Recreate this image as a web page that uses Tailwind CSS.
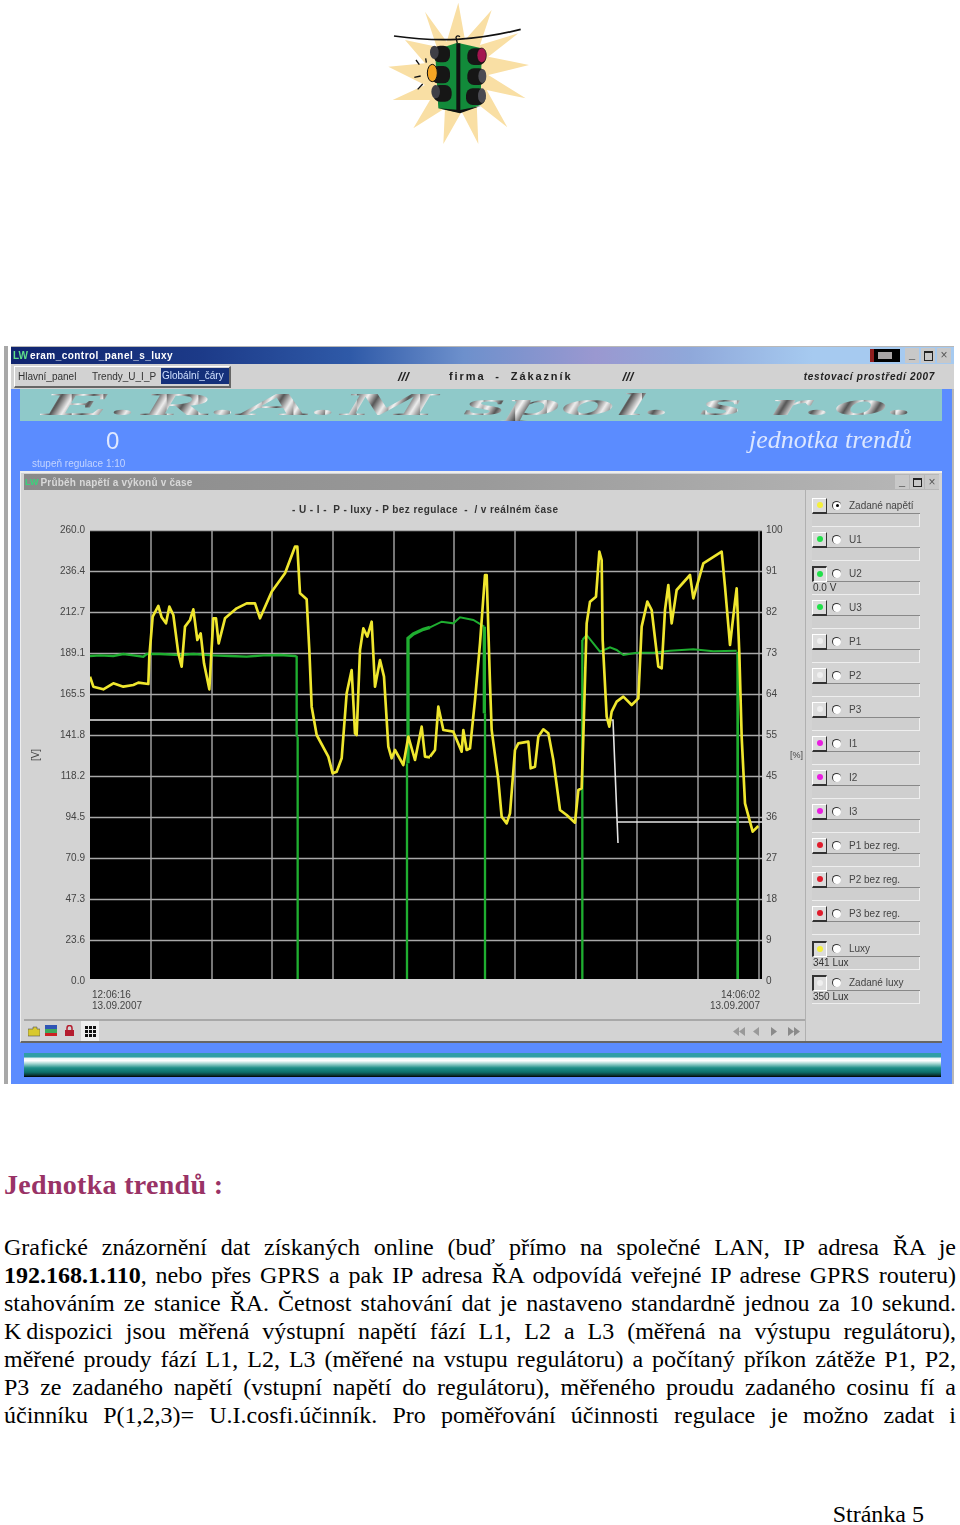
<!DOCTYPE html>
<html lang="cs">
<head>
<meta charset="utf-8">
<script src="https://cdn.jsdelivr.net/npm/@tailwindcss/browser@4"></script>
<title>Jednotka trendů</title>
</head>
<body class="bg-white">
<div class="w-[960px] h-[1525px] font-['Liberation_Serif',serif] text-black">

  <!-- logo -->
  <div class="h-[346px] pl-[380px]">
    <svg class="blur-[0.4px]" width="160" height="150" viewBox="0 0 480 450">
      <polygon fill="#f9dfa4" points="235,8 255,120 335,30 300,135 415,100 325,170 447,195 325,225 437,295 320,270 382,382 290,310 295,432 245,335 190,432 195,325 100,385 150,300 38,300 135,255 25,200 135,190 75,120 170,140 135,35 200,125"/>
      <path d="M42 108 Q 140 122 232 118 Q 330 112 422 88" fill="none" stroke="#111" stroke-width="5"/>
      <path d="M232 130 L228 112 Q 232 104 240 110" fill="none" stroke="#111" stroke-width="4"/>
      <polygon fill="#128a3a" points="165,150 232,128 305,145 302,315 240,338 175,325"/>
      <path d="M175 325 L240 340 L302 318 L240 330 Z" fill="#111"/>
      <rect x="229" y="130" width="12" height="205" fill="#111"/>
      <g fill="#161616">
        <rect x="160" y="137" width="50" height="50" rx="20"/>
        <rect x="155" y="198" width="55" height="52" rx="20"/>
        <rect x="160" y="255" width="55" height="50" rx="20"/>
        <rect x="262" y="145" width="55" height="50" rx="20"/>
        <rect x="262" y="205" width="55" height="50" rx="20"/>
        <rect x="258" y="265" width="58" height="50" rx="20"/>
      </g>
      <ellipse cx="163" cy="157" rx="13" ry="20" fill="#3f3f46"/>
      <ellipse cx="157" cy="219" rx="15" ry="26" fill="#f5a524" stroke="#111" stroke-width="3"/>
      <ellipse cx="167" cy="275" rx="13" ry="20" fill="#3f3f46"/>
      <ellipse cx="305" cy="166" rx="14" ry="22" fill="#a3154f" stroke="#111" stroke-width="2"/>
      <ellipse cx="307" cy="228" rx="12" ry="21" fill="#4b4b52"/>
      <ellipse cx="306" cy="287" rx="12" ry="22" fill="#4b4b52"/>
      <path d="M108 180 L118 194 M137 175 L139 188 M103 232 L122 228 M113 268 L128 252" stroke="#111" stroke-width="4" fill="none"/>
    </svg>
  </div>

  <!-- application screenshot -->
  <div class="ml-[4px] w-[950px] h-[738px] flex font-['Liberation_Sans',sans-serif] blur-[0.6px]">
    <div class="w-[4px] bg-[#a8a8a8]"></div>
    <div class="w-[3px] bg-white"></div>
    <div class="w-[943px] flex flex-col border-t border-[#b8b8b8] bg-[#5b8cff]">

      <!-- title bar -->
      <div class="h-[17px] flex items-center bg-[linear-gradient(90deg,#10246e_0%,#1c3a88_20%,#2f5aa8_36%,#6d90cc_48%,#9a98d0_62%,#8fa8da_72%,#a6caf0_85%,#a6caf0_100%)]">
        <span class="ml-[2px] text-[10px] font-bold text-[#5fe08a]">LW</span>
        <span class="ml-[2px] text-[10px] font-bold text-white tracking-[0.45px]">eram_control_panel_s_luxy</span>
        <div class="ml-auto mr-[3px] flex items-center gap-[2px]">
          <div class="w-[30px] h-[13px] mr-[3px] bg-black border-l-4 border-[#8f1d1d] pl-[4px] pr-[8px] py-[3px]"><div class="h-full bg-[#a8a4a4]"></div></div>
          <div class="w-[14px] h-[15px] bg-[#c8c8c8] text-[11px] leading-[13px] text-center text-black font-bold">_</div>
          <div class="w-[14px] h-[15px] bg-[#c8c8c8] flex items-center justify-center"><div class="w-[9px] h-[10px] border border-t-2 border-[#222]"></div></div>
          <div class="w-[14px] h-[15px] bg-[#c8c8c8] text-[12px] leading-[15px] text-center text-[#555]">×</div>
        </div>
      </div>

      <!-- menu bar -->
      <div class="h-[25px] flex items-center bg-[#d2d2d2] text-[#222]">
        <div class="ml-[3px] w-[217px] h-[22px] flex items-center border-t border-l border-white border-b-2 border-r-2 border-b-[#666] border-r-[#666] text-[10px]">
          <span class="ml-[3px] w-[74px] text-[#333]">Hlavní_panel</span>
          <span class="w-[69px] text-[#333]">Trendy_U_I_P</span>
          <span class="w-[68px] h-[16px] leading-[16px] pl-[1px] bg-[#14307a] text-[#cfe0ff]">Globální_čáry</span>
        </div>
        <span class="ml-[167px] w-[51px] text-[13px] font-bold italic">///</span>
        <span class="text-[11px] font-bold tracking-[1.9px] whitespace-pre">firma  -  Zákazník</span>
        <span class="ml-[50px] text-[13px] font-bold italic">///</span>
        <span class="ml-auto mr-[19px] text-[10px] font-bold italic tracking-[0.7px]">testovací prostředí 2007</span>
      </div>

      <!-- blue body -->
      <div class="flex-1 pl-[9px] flex flex-col border-r-2 border-[#b8b8b8]">
        <div class="w-[922px] h-[32px] bg-[#8fc9c9] flex items-center">
          <span class="ml-[20px] whitespace-nowrap origin-left scale-x-[3.52] font-['Liberation_Serif',serif] text-[31px] leading-[32px] font-bold italic text-transparent bg-clip-text bg-[linear-gradient(100deg,#3a3a3a_0%,#f4f4f4_30%,#555_50%,#eeeeee_72%,#444_100%)] bg-[length:9px_100%]">E.R.A.M spol. s r.o.</span>
        </div>
        <div class="h-[50px] flex items-start justify-between">
          <div class="ml-[12px] w-[106px] flex flex-col items-start">
            <span class="h-[30px] mt-[7px] ml-[74px] text-[24px] leading-[26px] text-[#dfe8ff]">0</span>
            <span class="text-[10px] leading-[12px] text-[#c3d4ff]">stupeň regulace 1:10</span>
          </div>
          <span class="mr-[40px] mt-[2px] font-['Liberation_Serif',serif] italic text-[26px] leading-[34px] text-[#dbe6ff]">jednotka trendů</span>
        </div>

        <!-- inner window -->
        <div class="w-[922px] h-[572px] bg-[#d3d3d3] border-t-2 border-l border-[#eeeeee] border-b-2 border-b-[#666] flex flex-col">
          <div class="mx-[3px] mt-[1px] h-[16px] flex items-center bg-[linear-gradient(90deg,#8a8a8a_0%,#9a9a9a_50%,#b8b8b8_100%)]">
            <span class="ml-[1px] text-[9px] font-bold text-[#39d47c] leading-none">LW</span>
            <span class="ml-[2px] text-[10px] font-bold text-[#d8d8d8] tracking-[0.2px]">Průběh napětí a výkonů v čase</span>
            <div class="ml-auto flex items-center gap-[1px]">
              <div class="w-[14px] h-[14px] bg-[#c8c8c8] text-[11px] leading-[12px] text-center text-black font-bold">_</div>
              <div class="w-[14px] h-[14px] bg-[#c8c8c8] flex items-center justify-center"><div class="w-[9px] h-[9px] border border-t-2 border-[#222]"></div></div>
              <div class="w-[14px] h-[14px] bg-[#c8c8c8] text-[12px] leading-[14px] text-center text-[#555]">×</div>
            </div>
          </div>

          <div class="flex-1 flex pl-[3px]">
            <!-- left area -->
            <div class="w-[781px] flex flex-col">
              <div class="h-[40px] pt-[13px] pl-[268px] text-[10px] leading-[14px] font-bold text-[#333] tracking-[0.42px] whitespace-pre">- U - I -  P - luxy - P bez regulace  -  / v reálném čase</div>
              <div class="h-[449px] flex">
                <div class="w-[66px] flex text-[10px] leading-[12px] text-[#444]">
                  <div class="w-[24px] flex items-center justify-center"><span class="-rotate-90 mt-[0px]">[V]</span></div>
                  <div class="w-[37px] h-[463px] -mt-[6px] flex flex-col justify-between items-end">
                    <span>260.0</span><span>236.4</span><span>212.7</span><span>189.1</span><span>165.5</span><span>141.8</span><span>118.2</span><span>94.5</span><span>70.9</span><span>47.3</span><span>23.6</span><span>0.0</span>
                  </div>
                </div>
                <svg class="block bg-black" width="672" height="449" viewBox="0 0 672 449">
                  <g stroke="#a8a8a8" stroke-width="1.4" fill="none">
                    <path d="M0 .5H672M0 41.5H672M0 82.5H672M0 123.5H672M0 164.5H672M0 205.5H672M0 246.5H672M0 287.5H672M0 328.5H672M0 369.5H672M0 410.5H672"/>
                    <path d="M61 0V449M122 0V449M182 0V449M243 0V449M304 0V449M364 0V449M425 0V449M486 0V449M547 0V449M608 0V449M669 0V449"/>
                  </g>
                  <path d="M0 190H523L528 313M528 292H672" stroke="#e4e4e4" stroke-width="1.6" fill="none"/>
                  <!-- green trace, left part -->
                  <g transform="translate(-10 0) scale(.33333)" fill="none" stroke="#1fae30">
                    <path stroke-width="7" d="M30 378L60 376L100 378L130 372L160 376L190 380L200 372L240 372L300 375L340 372L400 376L450 378L500 380L550 376L600 375L645 378L650 380V620"/>
                    <path stroke-width="7" d="M653 620V1347"/>
                    <path stroke-width="7" d="M981 1347V700"/>
                    <path stroke-width="10" d="M984 700V325L1000 312L1030 298L1050 292"/>
                  </g>
                  <!-- green trace, right part -->
                  <g transform="translate(330 0) scale(.33333)" fill="none" stroke="#1fae30">
                    <path stroke-width="6" d="M30 292L65 275L100 280L120 262L160 270L193 290"/>
                    <path stroke-width="10" d="M193 290V550"/>
                    <path stroke-width="7" d="M195 550V1347"/>
                    <path stroke-width="7" d="M487 1347V330"/>
                    <path stroke-width="6" d="M487 330L500 315L520 340L540 365L570 352L590 360L610 375L650 368L700 368L750 362L820 358L880 364L950 362"/>
                    <path stroke-width="8" d="M953 365V1347"/>
                  </g>
                  <!-- yellow trace -->
                  <g fill="none" stroke="#efe62e" stroke-width="8" stroke-linejoin="round">
                    <polyline transform="translate(-10 0) scale(.33333)" points="30,440 40,470 70,478 100,460 130,470 160,465 175,458 205,462 208,380 218,260 235,228 245,262 258,280 268,230 280,255 295,370 305,410 315,290 330,270 340,238 352,330 362,310 372,400 388,478 400,265 408,265 416,340 435,265 470,235 500,220 525,220 540,265 575,185 615,130 645,50 652,50 660,190 680,208 688,360 695,530 710,615 745,680 758,730 770,725 785,685 800,490 815,420 825,610 830,615 840,360 850,295 862,320 875,275 885,470 900,390 912,440 925,650 935,685 945,660 970,705 985,620 1005,690 1025,590 1035,680 1050,682"/>
                    <polyline transform="translate(330 0) scale(.33333)" points="30,680 45,660 55,530 70,600 100,605 125,665 130,600 140,660 150,655 165,510 180,340 195,135 200,135 210,460 215,600 235,750 245,860 260,880 270,850 285,660 295,640 325,635 332,715 345,710 355,620 370,598 385,610 400,690 420,840 440,855 465,878 475,780 485,775 490,620 500,280 510,215 528,200 538,65 545,90 548,330 560,560 568,590 575,545 590,515 610,500 635,525 655,505 665,290 682,215 695,240 715,410 725,415 735,240 745,165 755,280 770,180 810,135 820,205 850,100 905,65 915,170 930,345 945,215 950,175 958,370 965,620 975,820 998,905 1015,888"/>
                  </g>
                </svg>
                <div class="flex-1 flex text-[10px] leading-[12px] text-[#444]">
                  <div class="ml-[4px] w-[24px] h-[463px] -mt-[6px] flex flex-col justify-between">
                    <span>100</span><span>91</span><span>82</span><span>73</span><span>64</span><span>55</span><span>45</span><span>36</span><span>27</span><span>18</span><span>9</span><span>0</span>
                  </div>
                  <div class="flex items-center"><span class="text-[9px]">[%]</span></div>
                </div>
              </div>
              <div class="h-[40px] pl-[68px] pr-[45px] pt-[10px] flex justify-between text-[10px] leading-[11px] text-[#444]">
                <span>12:06:16<br>13.09.2007</span>
                <span class="text-right">14:06:02<br>13.09.2007</span>
              </div>
              <!-- toolbar -->
              <div class="flex-1 border-t-2 border-[#a8a8a8] flex items-center pl-[4px] pr-[5px]">
                <svg width="12" height="11" viewBox="0 0 12 11"><path d="M0 3H5V1H9V3H12V10H0Z" fill="#d9c92e" stroke="#555" stroke-width=".6"/></svg>
                <svg class="ml-[5px]" width="12" height="12" viewBox="0 0 12 12"><rect width="12" height="4" fill="#2f55b5"/><rect y="4" width="12" height="4" fill="#3fa85c"/><rect y="8" width="12" height="3" fill="#c22"/></svg>
                <svg class="ml-[7px]" width="11" height="12" viewBox="0 0 11 12"><path d="M3 5V3a2.5 2.5 0 0 1 5 0V5" fill="none" stroke="#b41c2e" stroke-width="1.5"/><rect x="1" y="5" width="9" height="6" fill="#b41c2e"/></svg>
                <div class="ml-[6px] w-[18px] h-[20px] bg-[#efefef] flex items-center justify-center">
                  <svg width="11" height="11" viewBox="0 0 11 11"><path d="M0 0h3v3H0zM4 0h3v3H4zM8 0h3v3H8zM0 4h3v3H0zM4 4h3v3H4zM8 4h3v3H8zM0 8h3v3H0zM4 8h3v3H4zM8 8h3v3H8z" fill="#111"/></svg>
                </div>
                <div class="ml-auto flex items-center gap-[8px]">
                  <svg width="12" height="9" viewBox="0 0 12 9"><path d="M6 0L0 4.500L6 9ZM12 0L6 4.500L12 9Z" fill="#9a9a9a"/></svg>
                  <svg width="6" height="9" viewBox="0 0 6 9"><path d="M6 0L0 4.500L6 9Z" fill="#9a9a9a"/></svg>
                  <svg class="ml-[4px]" width="6" height="9" viewBox="0 0 6 9"><path d="M0 0L6 4.500L0 9Z" fill="#8a8a8a"/></svg>
                  <svg class="ml-[3px]" width="12" height="9" viewBox="0 0 12 9"><path d="M0 0L6 4.500L0 9ZM6 0L12 4.500L6 9Z" fill="#8a8a8a"/></svg>
                </div>
              </div>
            </div>

            <!-- right panel -->
            <div class="w-[135px] border-l border-[#b0b0b0] pl-[6px] pr-[20px] pt-[7px] flex flex-col text-[10px] text-[#444]">
              <div class="h-[34px]"><div class="h-[17px] flex items-center border-b border-[#888]"><div class="w-[15px] h-[16px] -mb-[1px] border-t border-l border-white border-b-2 border-r border-b-[#333] border-r-[#333] bg-[#dcdcdc] flex items-center justify-center"><div class="w-[6px] h-[6px] rounded-full bg-[#f5f03a]"></div></div><div class="ml-[5px] w-[9px] h-[9px] rounded-full bg-white border-t border-l border-[#333] flex items-center justify-center"><div class="w-[3px] h-[3px] rounded-full bg-black"></div></div><span class="ml-[8px]">Zadané napětí</span></div><div class="w-[108px] h-[13px] border-b border-r border-[#eee] bg-[#cfcfcf]"></div></div>
              <div class="h-[34px]"><div class="h-[17px] flex items-center border-b border-[#888]"><div class="w-[15px] h-[16px] -mb-[1px] border-t border-l border-white border-b-2 border-r border-b-[#333] border-r-[#333] bg-[#dcdcdc] flex items-center justify-center"><div class="w-[6px] h-[6px] rounded-full bg-[#22e04a]"></div></div><div class="ml-[5px] w-[9px] h-[9px] rounded-full bg-white border-t border-l border-[#333]"></div><span class="ml-[8px]">U1</span></div><div class="w-[108px] h-[13px] border-b border-r border-[#eee] bg-[#cfcfcf]"></div></div>
              <div class="h-[34px]"><div class="h-[17px] flex items-center border-b border-[#888]"><div class="w-[15px] h-[16px] -mb-[1px] border-t-2 border-l-2 border-[#333] border-b border-r border-b-white border-r-white bg-[#dcdcdc] flex items-center justify-center"><div class="w-[6px] h-[6px] rounded-full bg-[#22e04a]"></div></div><div class="ml-[5px] w-[9px] h-[9px] rounded-full bg-white border-t border-l border-[#333]"></div><span class="ml-[8px]">U2</span></div><div class="w-[108px] h-[13px] border-b border-r border-[#eee] bg-[#cfcfcf] pl-[1px] leading-[12px] text-[#333]">0.0 V</div></div>
              <div class="h-[34px]"><div class="h-[17px] flex items-center border-b border-[#888]"><div class="w-[15px] h-[16px] -mb-[1px] border-t border-l border-white border-b-2 border-r border-b-[#333] border-r-[#333] bg-[#dcdcdc] flex items-center justify-center"><div class="w-[6px] h-[6px] rounded-full bg-[#22e04a]"></div></div><div class="ml-[5px] w-[9px] h-[9px] rounded-full bg-white border-t border-l border-[#333]"></div><span class="ml-[8px]">U3</span></div><div class="w-[108px] h-[13px] border-b border-r border-[#eee] bg-[#cfcfcf]"></div></div>
              <div class="h-[34px]"><div class="h-[17px] flex items-center border-b border-[#888]"><div class="w-[15px] h-[16px] -mb-[1px] border-t border-l border-white border-b-2 border-r border-b-[#333] border-r-[#333] bg-[#dcdcdc] flex items-center justify-center"><div class="w-[6px] h-[6px] rounded-full bg-[#efefef]"></div></div><div class="ml-[5px] w-[9px] h-[9px] rounded-full bg-white border-t border-l border-[#333]"></div><span class="ml-[8px]">P1</span></div><div class="w-[108px] h-[13px] border-b border-r border-[#eee] bg-[#cfcfcf]"></div></div>
              <div class="h-[34px]"><div class="h-[17px] flex items-center border-b border-[#888]"><div class="w-[15px] h-[16px] -mb-[1px] border-t border-l border-white border-b-2 border-r border-b-[#333] border-r-[#333] bg-[#dcdcdc] flex items-center justify-center"><div class="w-[6px] h-[6px] rounded-full bg-[#efefef]"></div></div><div class="ml-[5px] w-[9px] h-[9px] rounded-full bg-white border-t border-l border-[#333]"></div><span class="ml-[8px]">P2</span></div><div class="w-[108px] h-[13px] border-b border-r border-[#eee] bg-[#cfcfcf]"></div></div>
              <div class="h-[34px]"><div class="h-[17px] flex items-center border-b border-[#888]"><div class="w-[15px] h-[16px] -mb-[1px] border-t border-l border-white border-b-2 border-r border-b-[#333] border-r-[#333] bg-[#dcdcdc] flex items-center justify-center"><div class="w-[6px] h-[6px] rounded-full bg-[#efefef]"></div></div><div class="ml-[5px] w-[9px] h-[9px] rounded-full bg-white border-t border-l border-[#333]"></div><span class="ml-[8px]">P3</span></div><div class="w-[108px] h-[13px] border-b border-r border-[#eee] bg-[#cfcfcf]"></div></div>
              <div class="h-[34px]"><div class="h-[17px] flex items-center border-b border-[#888]"><div class="w-[15px] h-[16px] -mb-[1px] border-t border-l border-white border-b-2 border-r border-b-[#333] border-r-[#333] bg-[#dcdcdc] flex items-center justify-center"><div class="w-[6px] h-[6px] rounded-full bg-[#e81ee0]"></div></div><div class="ml-[5px] w-[9px] h-[9px] rounded-full bg-white border-t border-l border-[#333]"></div><span class="ml-[8px]">I1</span></div><div class="w-[108px] h-[13px] border-b border-r border-[#eee] bg-[#cfcfcf]"></div></div>
              <div class="h-[34px]"><div class="h-[17px] flex items-center border-b border-[#888]"><div class="w-[15px] h-[16px] -mb-[1px] border-t border-l border-white border-b-2 border-r border-b-[#333] border-r-[#333] bg-[#dcdcdc] flex items-center justify-center"><div class="w-[6px] h-[6px] rounded-full bg-[#e81ee0]"></div></div><div class="ml-[5px] w-[9px] h-[9px] rounded-full bg-white border-t border-l border-[#333]"></div><span class="ml-[8px]">I2</span></div><div class="w-[108px] h-[13px] border-b border-r border-[#eee] bg-[#cfcfcf]"></div></div>
              <div class="h-[34px]"><div class="h-[17px] flex items-center border-b border-[#888]"><div class="w-[15px] h-[16px] -mb-[1px] border-t border-l border-white border-b-2 border-r border-b-[#333] border-r-[#333] bg-[#dcdcdc] flex items-center justify-center"><div class="w-[6px] h-[6px] rounded-full bg-[#e81ee0]"></div></div><div class="ml-[5px] w-[9px] h-[9px] rounded-full bg-white border-t border-l border-[#333]"></div><span class="ml-[8px]">I3</span></div><div class="w-[108px] h-[13px] border-b border-r border-[#eee] bg-[#cfcfcf]"></div></div>
              <div class="h-[34px]"><div class="h-[17px] flex items-center border-b border-[#888]"><div class="w-[15px] h-[16px] -mb-[1px] border-t border-l border-white border-b-2 border-r border-b-[#333] border-r-[#333] bg-[#dcdcdc] flex items-center justify-center"><div class="w-[6px] h-[6px] rounded-full bg-[#e01c2c]"></div></div><div class="ml-[5px] w-[9px] h-[9px] rounded-full bg-white border-t border-l border-[#333]"></div><span class="ml-[8px]">P1 bez reg.</span></div><div class="w-[108px] h-[13px] border-b border-r border-[#eee] bg-[#cfcfcf]"></div></div>
              <div class="h-[34px]"><div class="h-[17px] flex items-center border-b border-[#888]"><div class="w-[15px] h-[16px] -mb-[1px] border-t border-l border-white border-b-2 border-r border-b-[#333] border-r-[#333] bg-[#dcdcdc] flex items-center justify-center"><div class="w-[6px] h-[6px] rounded-full bg-[#e01c2c]"></div></div><div class="ml-[5px] w-[9px] h-[9px] rounded-full bg-white border-t border-l border-[#333]"></div><span class="ml-[8px]">P2 bez reg.</span></div><div class="w-[108px] h-[13px] border-b border-r border-[#eee] bg-[#cfcfcf]"></div></div>
              <div class="h-[34px]"><div class="h-[17px] flex items-center border-b border-[#888]"><div class="w-[15px] h-[16px] -mb-[1px] border-t border-l border-white border-b-2 border-r border-b-[#333] border-r-[#333] bg-[#dcdcdc] flex items-center justify-center"><div class="w-[6px] h-[6px] rounded-full bg-[#e01c2c]"></div></div><div class="ml-[5px] w-[9px] h-[9px] rounded-full bg-white border-t border-l border-[#333]"></div><span class="ml-[8px]">P3 bez reg.</span></div><div class="w-[108px] h-[13px] border-b border-r border-[#eee] bg-[#cfcfcf]"></div></div>
              <div class="h-[34px] mt-[1px]"><div class="h-[17px] flex items-center border-b border-[#888]"><div class="w-[15px] h-[16px] -mb-[1px] border-t-2 border-l-2 border-[#333] border-b border-r border-b-white border-r-white bg-[#dcdcdc] flex items-center justify-center"><div class="w-[6px] h-[6px] rounded-full bg-[#f5f03a]"></div></div><div class="ml-[5px] w-[9px] h-[9px] rounded-full bg-white border-t border-l border-[#333]"></div><span class="ml-[8px]">Luxy</span></div><div class="w-[108px] h-[13px] border-b border-r border-[#eee] bg-[#cfcfcf] pl-[1px] leading-[12px] text-[#333]">341 Lux</div></div>
              <div class="h-[34px]"><div class="h-[17px] flex items-center border-b border-[#888]"><div class="w-[15px] h-[16px] -mb-[1px] border-t-2 border-l-2 border-[#333] border-b border-r border-b-white border-r-white bg-[#dcdcdc] flex items-center justify-center"><div class="w-[6px] h-[6px] rounded-full bg-[#efefef]"></div></div><div class="ml-[5px] w-[9px] h-[9px] rounded-full bg-white border-t border-l border-[#333]"></div><span class="ml-[8px]">Zadané luxy</span></div><div class="w-[108px] h-[13px] border-b border-r border-[#eee] bg-[#cfcfcf] pl-[1px] leading-[12px] text-[#333]">350 Lux</div></div>
            </div>
          </div>
        </div>

        <!-- bottom gradient strip -->
        <div class="ml-[4px] mt-[10px] w-[917px] h-[24px] bg-[linear-gradient(180deg,#2f9ea6_0%,#2f9ea6_16%,#e8f5f4_22%,#ffffff_32%,#9fd4cf_45%,#1f8f88_62%,#0c6f6a_80%,#0a3a38_92%,#000_100%)]"></div>
      </div>
    </div>
  </div>

  <!-- text -->
  <h1 class="mt-[84px] ml-[4px] text-[28px] leading-[34px] font-bold tracking-[0.3px] text-[#993366]">Jednotka trendů :</h1>
  <div class="mt-[31px] ml-[4px] w-[952px] text-[24px] leading-[28px] text-justify [text-align-last:justify]">
    <p>Grafické znázornění dat získaných online (buď přímo na společné LAN, IP adresa ŘA je</p>
    <p><b>192.168.1.110</b>, nebo přes GPRS a pak IP adresa ŘA odpovídá veřejné IP adrese GPRS routeru)</p>
    <p>stahováním ze stanice ŘA. Četnost stahování dat je nastaveno standardně jednou za 10 sekund.</p>
    <p>K&#8201;dispozici jsou měřená výstupní napětí fází L1, L2 a L3 (měřená na výstupu regulátoru),</p>
    <p>měřené proudy fází L1, L2, L3 (měřené na vstupu regulátoru) a počítaný příkon zátěže P1, P2,</p>
    <p>P3 ze zadaného napětí (vstupní napětí do regulátoru), měřeného proudu zadaného cosinu fí a</p>
    <p>účinníku P(1,2,3)= U.I.cosfi.účinník. Pro poměřování účinnosti regulace je možno zadat i</p>
  </div>
  <div class="mt-[75px] pr-[36px] text-right text-[24px] leading-[20px]">Stránka 5</div>
</div>
</body>
</html>
